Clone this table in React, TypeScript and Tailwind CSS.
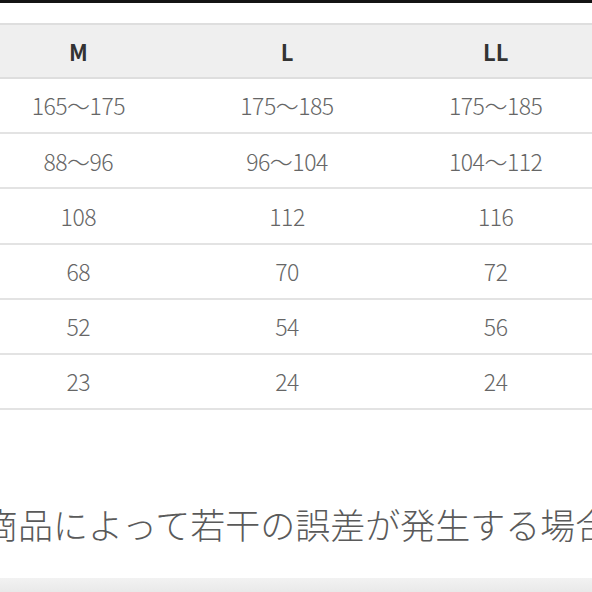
import * as React from "react"

const sizes = ["M", "L", "LL"]

const rows = [
  ["165～175", "175～185", "175～185"],
  ["88～96", "96～104", "104～112"],
  ["108", "112", "116"],
  ["68", "70", "72"],
  ["52", "54", "56"],
  ["23", "24", "24"],
]

export default function App() {
  return (
    <div
      className="flex h-[592px] w-[592px] flex-col overflow-hidden bg-white"
      style={{ fontFamily: '"Noto Sans CJK JP", "Noto Sans", sans-serif' }}
    >
      {/* top edge */}
      <div className="h-[3px] bg-[#141414]" />
      <div className="h-[20px]" />

      {/* size table */}
      <div className="-ml-[26px] w-[626px]">
        <div className="grid h-[56px] grid-cols-3 items-center border-y-2 border-[#dedede] bg-[#efefef]">
          {sizes.map((s) => (
            <div key={s} className="text-center text-[22px] font-bold text-[#333]">
              {s}
            </div>
          ))}
        </div>
        {rows.map((row, i) => (
          <div key={i} className="grid h-[55.2px] grid-cols-3 items-center border-b-2 border-[#e3e3e3]">
            {row.map((v, j) => (
              <div key={j} className="text-center text-[23px] font-light tracking-[-0.5px] text-[#666]">
                {v}
              </div>
            ))}
          </div>
        ))}
      </div>

      {/* note */}
      <div className="mt-[96px] -ml-[17px] whitespace-nowrap text-[35px] leading-[35px] font-light text-[#5a5a5a]">
        商品によって若干の誤差が発生する場合
      </div>

      <div className="flex-1" />
      <div className="h-[14px] bg-gradient-to-b from-[#f2f2f2] to-[#e9e9e9]" />
    </div>
  )
}
